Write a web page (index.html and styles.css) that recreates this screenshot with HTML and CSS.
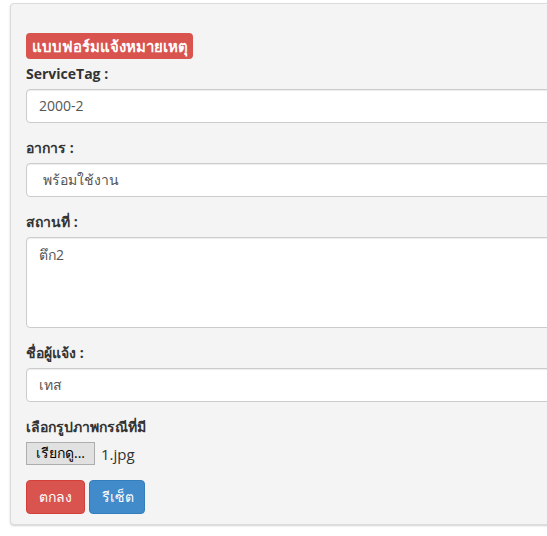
FILE: index.html
```html
<!DOCTYPE html>
<html lang="th">
<head>
<meta charset="utf-8">
<title>แบบฟอร์มแจ้งหมายเหตุ</title>
<link rel="stylesheet" href="styles.css">
</head>
<body>
<div class="panel">
  <h4 class="title"><span class="badge">แบบฟอร์มแจ้งหมายเหตุ</span></h4>
  <form class="form">
    <div class="group">
      <label class="lbl">ServiceTag :</label>
      <div class="field">2000-2</div>
    </div>
    <div class="group">
      <label class="lbl">อาการ :</label>
      <div class="field select">พร้อมใช้งาน</div>
    </div>
    <div class="group">
      <label class="lbl">สถานที่ :</label>
      <div class="field area">ตึก2</div>
    </div>
    <div class="group">
      <label class="lbl">ชื่อผู้แจ้ง :</label>
      <div class="field">เทส</div>
    </div>
    <div class="group file-group">
      <label class="lbl">เลือกรูปภาพกรณีที่มี</label>
      <div class="file">
        <span class="file-btn">เรียกดู...</span>
        <span class="file-name">1.jpg</span>
      </div>
    </div>
    <div class="actions">
      <button type="button" class="btn btn-danger">ตกลง</button>
      <button type="button" class="btn btn-primary">รีเซ็ต</button>
    </div>
  </form>
</div>
</body>
</html>
```
FILE: styles.css
```css
html, body {
  margin: 0;
  padding: 0;
  overflow: hidden;
  background: #fff;
}
body {
  font-family: "Open Sans", "Noto Sans", "Liberation Sans", sans-serif;
  font-size: 14px;
  color: #333;
  width: 547px;
  height: 536px;
}
.panel {
  margin: 3px 0 0 10px;
  width: 640px;
  box-sizing: border-box;
  background: #f4f4f4;
  border: 1px solid #dcdcdc;
  border-radius: 4px;
  box-shadow: 0 1px 2px rgba(0, 0, 0, 0.18);
  padding: 29px 15px 10px;
}
.title {
  margin: 0 0 5px;
  height: 26px;
  line-height: 26px;
}
.badge {
  display: inline-block;
  height: 26px;
  line-height: 26px;
  padding: 0 5px 0 6px;
  background: #d9534f;
  color: #fff;
  font-size: 15px;
  font-weight: 700;
  border-radius: 4px;
  vertical-align: top;
}
.form {
  margin: 0;
}
.group {
  margin-bottom: 15px;
}
.lbl {
  display: block;
  font-weight: 700;
  font-size: 14px;
  line-height: 20px;
  margin-bottom: 5px;
  color: #333;
}
.field {
  box-sizing: border-box;
  height: 34px;
  line-height: 20px;
  padding: 6px 12px;
  background: #fff;
  border: 1px solid #ccc;
  border-radius: 4px;
  box-shadow: inset 0 1px 1px rgba(0, 0, 0, 0.075);
  color: #555;
  font-size: 14px;
  white-space: nowrap;
}
.select {
  padding-left: 16px;
}
.area {
  height: 91px;
  padding-top: 7px;
}
.file-group {
  margin-bottom: 15px;
}
.file {
  display: flex;
  align-items: center;
  gap: 6px;
  height: 23px;
}
.file-btn {
  box-sizing: border-box;
  height: 23px;
  line-height: 20px;
  padding: 0 9px;
  background: #e1e1e1;
  border: 1px solid #adadad;
  color: #000;
  font-size: 14px;
}
.file-name {
  color: #333;
  font-size: 15px;
}
.actions {
  display: flex;
  gap: 4px;
}
.btn {
  box-sizing: border-box;
  height: 34px;
  padding: 6px 12px;
  font-family: inherit;
  font-size: 14px;
  line-height: 20px;
  color: #fff;
  border-radius: 4px;
  border: 1px solid transparent;
  cursor: pointer;
}
.btn-danger {
  background: #d9534f;
  border-color: #d43f3a;
  width: 59px;
}
.btn-primary {
  background: #428bca;
  border-color: #357ebd;
  width: 56px;
}
```
